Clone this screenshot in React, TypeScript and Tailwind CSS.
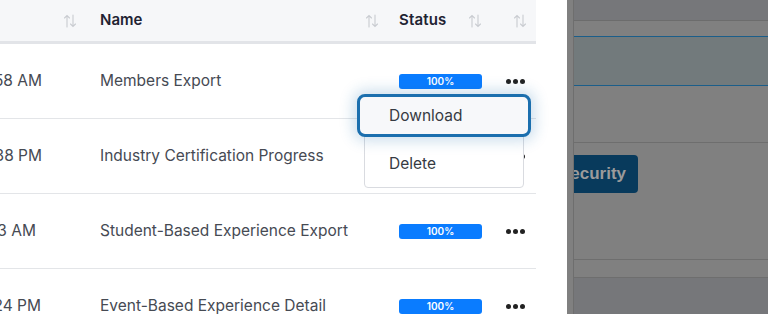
type Row = { time: string; end: number; name: string };

const rows: Row[] = [
  { time: '10:14:58 AM', end: 42, name: 'Members Export' },
  { time: '04:22:38 PM', end: 42, name: 'Industry Certification Progress' },
  { time: '9:51:3 AM', end: 36, name: 'Student-Based Experience Export' },
  { time: '02:17:24 PM', end: 41, name: 'Event-Based Experience Detail' },
];

function SortIcon() {
  return (
    <svg width="14" height="14" viewBox="0 0 14 14" fill="none" stroke="#c9ccd1" strokeWidth="1.1" strokeLinecap="round">
      <path d="M4 13V1.5M1.5 4L4 1.5L6.5 4" />
      <path d="M10 1V12.5M7.5 10L10 12.5L12.5 10" />
    </svg>
  );
}

function Dots() {
  return (
    <div className="flex gap-[2px]">
      <span className="h-[5px] w-[5px] rounded-full bg-[#222]" />
      <span className="h-[5px] w-[5px] rounded-full bg-[#222]" />
      <span className="h-[5px] w-[5px] rounded-full bg-[#222]" />
    </div>
  );
}

export default function App() {
  return (
    <div className="flex h-[314px] w-[768px] overflow-hidden bg-white font-['Inter','Liberation_Sans',sans-serif]">
      <div className="relative w-[567px] shrink-0 overflow-hidden">
        <div className="w-[536px]">
          <div className="flex h-[41px] items-center bg-[#f6f7f9] text-[15px] font-semibold text-[#1f2333]">
            <div className="flex w-[100px] justify-end pr-[23px]">
              <SortIcon />
            </div>
            <div className="flex w-[299px] items-center justify-between pr-[20px]">
              <span>Name</span>
              <SortIcon />
            </div>
            <div className="flex w-[90px] items-center justify-between pr-[7px]">
              <span className="tracking-[0.01em]">Status</span>
              <SortIcon />
            </div>
            <div className="flex flex-1 justify-end pr-[9px]">
              <SortIcon />
            </div>
          </div>
          <div className="h-[3px] bg-[#e2e4e8]" />
          {rows.map((r, i) => (
            <div key={i} className="flex h-[75px] items-center border-b border-[#e3e5e8] text-[15.5px] text-[#464a53]">
              <div className="w-[100px]">
                <div className="flex justify-end whitespace-nowrap" style={{ width: r.end }}>
                  {r.time}
                </div>
              </div>
              <div className="w-[299px] whitespace-nowrap">{r.name}</div>
              <div className="w-[107px]">
                <div className="flex h-[15px] w-[83px] items-center justify-center rounded-[3px] bg-[#0a7cff] text-[10px] font-semibold text-white">
                  100%
                </div>
              </div>
              <Dots />
            </div>
          ))}
        </div>

        <div className="absolute left-[364px] top-[96px] flex h-[92px] w-[160px] flex-col rounded-[4px] border border-[#d9dbe0] bg-white text-[15.5px] text-[#363a42]">
          <div className="-mx-[8px] -mt-[3px] flex h-[43px] items-center rounded-[8px] border-[3px] border-[#1b6fae] bg-[#f7f8fa] pl-[29px] pt-[1px] shadow-[0_0_14px_4px_rgba(27,111,174,0.22)]">
            Download
          </div>
          <div className="flex flex-1 items-center pl-[24px] pt-[4px]">Delete</div>
        </div>
      </div>

      <div className="flex min-w-0 flex-1 bg-[#808080]">
        <div className="w-[7px] shrink-0 border-r border-[#6e6e6e]" />
        <div className="flex min-w-0 flex-1 flex-col overflow-hidden">
          <div className="h-[21px] shrink-0 border-b border-[#6c6c6c] bg-[#76777a]" />
          <div className="h-[16px] shrink-0 border-b border-[#1b5e8a]" />
          <div className="h-[49px] shrink-0 border-b border-[#1b5e8a] bg-[#727a7c]" />
          <div className="h-[57px] shrink-0 border-b border-[#6e6e6e]" />
          <div className="flex h-[117px] shrink-0 items-start border-b border-[#6e6e6e] pt-[12px]">
            <div className="-ml-[26px] flex h-[38px] w-[90px] shrink-0 items-center justify-end rounded-[4px] bg-[#083a5c] pr-[12px] font-['Liberation_Sans',sans-serif] text-[17px] font-bold text-[#9b9b9b]">
              Security
            </div>
          </div>
          <div className="h-[18px] shrink-0 border-b border-[#6e6e6e]" />
          <div className="flex-1 bg-[#76777a]" />
        </div>
      </div>
    </div>
  );
}
